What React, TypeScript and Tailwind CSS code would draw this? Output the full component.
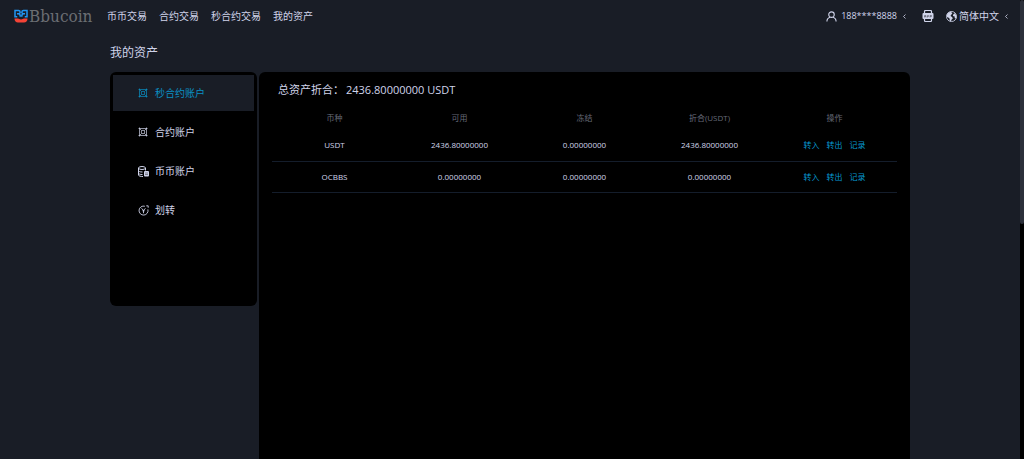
import type { ReactNode } from 'react';

type IconProps = { className?: string };

function LogoMark() {
  return (
    <svg viewBox="0 0 28 28" className="h-3.5 w-3.5 shrink-0" fill="none" aria-hidden="true">
      <path d="M2 17V3h7a3 3 0 0 1 0 6.500H6M9 9.500c2.500 0 3.500 2 3.500 6M6.500 15.500H2" stroke="#2196f3" strokeWidth="3" />
      <path d="M26 17V3h-7a3 3 0 0 0 0 6.500h3M19 9.500c-2.500 0-3.500 2-3.500 6M21.500 15.500H26" stroke="#2196f3" strokeWidth="3" />
      <path d="M1 19h7c2 0 3 2 6 2s4-2 6-2h7c0 5-3 8-7 8H8c-4 0-7-3-7-8z" fill="#f44336" />
    </svg>
  );
}

function UserIcon({ className }: IconProps) {
  return (
    <svg viewBox="0 0 24 24" className={className} fill="none" stroke="currentColor" strokeWidth="2.400" aria-hidden="true">
      <circle cx="12" cy="8" r="6" />
      <path d="M2 23c0-5 3-8.500 7-9.500M22 23c0-5-3-8.500-7-9.500" />
    </svg>
  );
}

function AppIcon({ className }: IconProps) {
  return (
    <svg viewBox="0 0 24 24" className={className} fill="none" stroke="currentColor" strokeWidth="2.400" aria-hidden="true">
      <path d="M5 7V3a2 2 0 0 1 2-2h10a2 2 0 0 1 2 2v4M5 17v4a2 2 0 0 0 2 2h10a2 2 0 0 0 2-2v-4" />
      <rect x="1" y="6" width="22" height="12" rx="2" fill="currentColor" stroke="none" />
      <path d="M5 15v-4h3v4M5 13h3M11 15v-4h2v2h-2M16 15v-4h3v2h-3" stroke="#191d26" strokeWidth="0.800" />
    </svg>
  );
}

function GlobeIcon({ className }: IconProps) {
  return (
    <svg viewBox="0 0 24 24" className={className} aria-hidden="true">
      <circle cx="12" cy="12" r="11" fill="none" stroke="currentColor" strokeWidth="1.800" />
      <path d="M2 8C4 4 8 1 13 1l-1 3 2 2-3 2-1 3 3 2 2 3-3 3-1 4-3-1v-5l-3-3-3-1zM16 3l5 4 2 5-1 5-3-2v-3l-4-1 1-4 2-1z" fill="currentColor" />
    </svg>
  );
}

function ContractIcon({ className }: IconProps) {
  return (
    <svg viewBox="0 0 20 20" className={className} fill="none" stroke="currentColor" strokeWidth="1.400" aria-hidden="true">
      <path d="M3 1v18M17 1v18M1 3h18M1 17h18" />
      <circle cx="10" cy="10" r="3.500" />
      <path d="M3 3l4.500 4.500M17 3l-4.500 4.500M3 17l4.500-4.500M17 17l-4.500-4.500" />
    </svg>
  );
}

function CoinsIcon({ className }: IconProps) {
  return (
    <svg viewBox="0 0 22 22" className={className} fill="none" stroke="currentColor" strokeWidth="2" aria-hidden="true">
      <ellipse cx="8" cy="4" rx="7" ry="3" />
      <path d="M1 4v14c0 2 4 3 9 3M15 4v5M1 9c0 2 3 3 8 3M1 14c0 2 3 3 8 3" />
      <rect x="12" y="10" width="10" height="11" rx="2" fill="currentColor" stroke="none" />
      <path d="M14 14h6M14 17h6" stroke="#000" strokeWidth="0.800" />
    </svg>
  );
}

function TransferIcon({ className }: IconProps) {
  return (
    <svg viewBox="0 0 20 20" className={className} fill="none" stroke="currentColor" strokeWidth="1.600" aria-hidden="true">
      <path d="M12.500 2.300A8.200 8.200 0 1 0 18 8M6.500 6L10 10l3.500-4M10 9v6" />
      <path d="M15 1.500h3.500V5" />
      <path d="M7.500 10.500h5" strokeWidth="1.200" />
    </svg>
  );
}

function Chevron() {
  return (
    <svg viewBox="0 0 6 10" className="h-[5px] w-[3px]" fill="none" stroke="currentColor" strokeWidth="1.600" aria-hidden="true">
      <path d="M5 1L1 5l4 4" />
    </svg>
  );
}

const navLinks = ['币币交易', '合约交易', '秒合约交易', '我的资产'];

const accounts: { label: string; icon: ReactNode }[] = [
  { label: '秒合约账户', icon: <ContractIcon className="h-2.5 w-2.5" /> },
  { label: '合约账户', icon: <ContractIcon className="h-2.5 w-2.5" /> },
  { label: '币币账户', icon: <CoinsIcon className="h-[11px] w-[11px]" /> },
  { label: '划转', icon: <TransferIcon className="h-[11px] w-[11px]" /> },
];

const columns = ['币种', '可用', '冻结', '折合(USDT)', '操作'];

const balances = [
  { coin: 'USDT', available: '2436.80000000', frozen: '0.00000000', total: '2436.80000000' },
  { coin: 'OCBBS', available: '0.00000000', frozen: '0.00000000', total: '0.00000000' },
];

const actions = ['转入', '转出', '记录'];

function Header() {
  return (
    <header className="flex h-8 items-center justify-between pl-3.5 pr-3">
      <div className="flex items-center">
        <a href="#" className="flex w-[93px] items-center gap-px">
          <LogoMark />
          <span className="font-['DejaVu_Serif_Condensed','DejaVu_Serif',serif] text-[17px] leading-5 text-[#6b6e73]">
            Bbucoin
          </span>
        </a>
        <nav className="flex gap-3 text-[10px]">
          {navLinks.map((link) => (
            <a key={link} href="#">
              {link}
            </a>
          ))}
        </nav>
      </div>
      <div className="flex items-center">
        <button type="button" className="flex items-center">
          <UserIcon className="mr-1 h-[11px] w-[11px]" />
          <span className="mr-1.5 text-[9px]">188****8888</span>
          <Chevron />
        </button>
        <button type="button" aria-label="APP" className="ml-4 mr-3">
          <AppIcon className="h-3 w-3" />
        </button>
        <button type="button" className="flex items-center">
          <GlobeIcon className="mr-0.5 h-[11px] w-[11px]" />
          <span className="mr-1.5 text-[10px]">简体中文</span>
          <Chevron />
        </button>
      </div>
    </header>
  );
}

function Sidebar() {
  return (
    <aside className="h-[234px] w-[147px] shrink-0 rounded-md bg-black p-[3px]">
      <ul className="flex flex-col gap-[3px]">
        {accounts.map((account, index) => (
          <li key={account.label}>
            <a
              href="#"
              className={
                index === 0
                  ? 'flex h-9 items-center bg-[#191d26] pl-6 text-[#0990c4]'
                  : 'flex h-9 items-center pl-6'
              }
            >
              <span className="mr-1.5 flex w-3 justify-center">{account.icon}</span>
              <span className="text-[10px]">{account.label}</span>
            </a>
          </li>
        ))}
      </ul>
    </aside>
  );
}

function BalanceTable() {
  return (
    <table className="w-full table-fixed text-center text-[8px] leading-3">
      <thead>
        <tr className="h-6 text-[#666a78]">
          {columns.map((column) => (
            <th key={column} className="font-normal">
              {column}
            </th>
          ))}
        </tr>
      </thead>
      <tbody>
        {balances.map((row) => (
          <tr key={row.coin} className="h-[31px] border-b border-[#141d2b]">
            <td>{row.coin}</td>
            <td>{row.available}</td>
            <td>{row.frozen}</td>
            <td>{row.total}</td>
            <td>
              <div className="flex justify-center gap-[7px] text-[#069bd4]">
                {actions.map((action) => (
                  <a key={action} href="#">
                    {action}
                  </a>
                ))}
              </div>
            </td>
          </tr>
        ))}
      </tbody>
    </table>
  );
}

export default function App() {
  return (
    <div className="flex h-screen overflow-hidden bg-[#191d26] font-['Open_Sans','Noto_Sans_CJK_SC',sans-serif] text-[#d0d4ea]">
      <div className="flex min-w-0 flex-1 flex-col">
        <Header />
        <main className="mx-auto flex w-full max-w-[800px] flex-1 flex-col">
          <h1 className="flex h-10 items-center pt-0.5 text-[12px]">我的资产</h1>
          <div className="flex flex-1 items-start gap-0.5">
            <Sidebar />
            <section className="min-w-0 flex-1 self-stretch rounded-t-md bg-black px-[13px] pt-2">
              <p className="mb-1.5 flex h-5 items-center gap-0.5 pl-1.5 text-[11px]">
                <span>总资产折合：</span>
                <span>2436.80000000 USDT</span>
              </p>
              <BalanceTable />
            </section>
          </div>
        </main>
      </div>
      <div className="w-1 bg-black">
        <div className="h-56 rounded-sm bg-[#2c303a]" />
      </div>
    </div>
  );
}
